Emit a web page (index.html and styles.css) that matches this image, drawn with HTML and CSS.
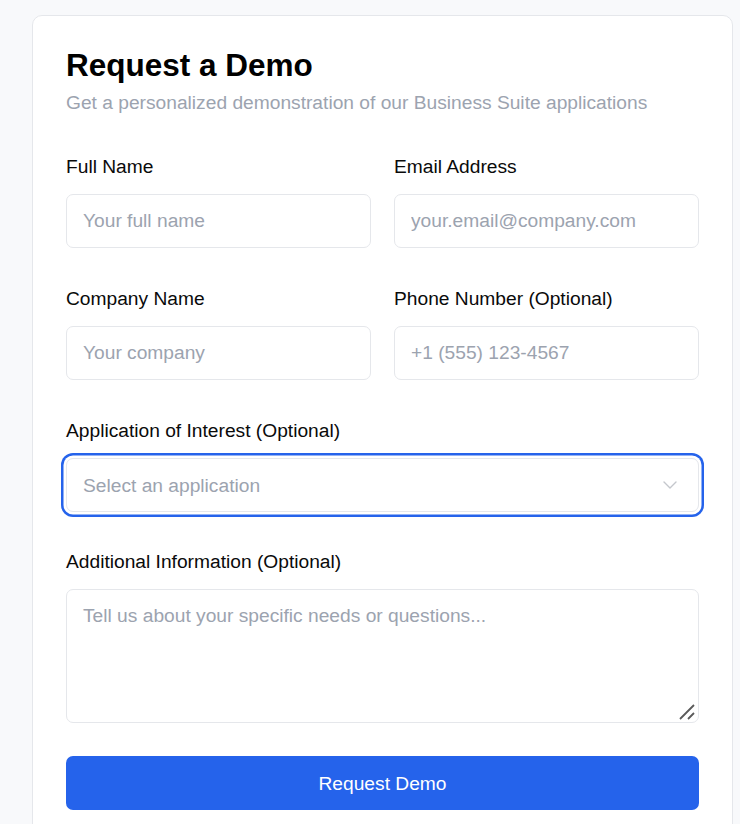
FILE: index.html
```html
<!DOCTYPE html>
<html lang="en">
<head>
<meta charset="utf-8">
<title>Request a Demo</title>
<link rel="stylesheet" href="styles.css">
</head>
<body>
<div class="card">
  <h1 class="title">Request a Demo</h1>
  <p class="subtitle">Get a personalized demonstration of our Business Suite applications</p>
  <form class="form">
    <div class="grid">
      <div class="field">
        <label class="label" for="name">Full Name</label>
        <input class="input" id="name" type="text" placeholder="Your full name">
      </div>
      <div class="field">
        <label class="label" for="email">Email Address</label>
        <input class="input" id="email" type="email" placeholder="your.email@company.com">
      </div>
      <div class="field">
        <label class="label" for="company">Company Name</label>
        <input class="input" id="company" type="text" placeholder="Your company">
      </div>
      <div class="field">
        <label class="label" for="phone">Phone Number (Optional)</label>
        <input class="input" id="phone" type="tel" placeholder="+1 (555) 123-4567">
      </div>
    </div>
    <div class="field">
      <label class="label" for="app">Application of Interest (Optional)</label>
      <div class="select-wrap">
        <select class="input select focused" id="app">
          <option value="" selected>Select an application</option>
        </select>
        <svg class="chevron" width="14" height="8" viewBox="0 0 14 8"><path d="M1 1l6 6 6-6" fill="none" stroke="#c4c7cc" stroke-width="1.4" stroke-linecap="round" stroke-linejoin="round"/></svg>
      </div>
    </div>
    <div class="field field-info">
      <label class="label" for="info">Additional Information (Optional)</label>
      <div class="textarea-wrap">
        <textarea class="input textarea" id="info" placeholder="Tell us about your specific needs or questions..."></textarea>
        <svg class="grip" width="18" height="18" viewBox="0 0 18 18"><path d="M2 16L16 2M10 16l6-6" fill="none" stroke="#5a5a5a" stroke-width="1.8"/></svg>
      </div>
    </div>
    <button class="button" type="button">Request Demo</button>
  </form>
</div>
</body>
</html>
```

FILE: styles.css
```css
* { box-sizing: border-box; }
html, body { margin: 0; }
body {
  background: #f8f9fb;
  font-family: "Liberation Sans", Arial, sans-serif;
  padding: 15px 7px 0 32px;
  overflow: hidden;
}
.card {
  background: #fff;
  border: 1px solid #e5e7eb;
  border-radius: 10px;
  padding: 31px 33px 34px 33px;
}
.title {
  margin: 0;
  font-size: 31.5px;
  line-height: 37.8px;
  font-weight: 700;
  color: #000;
}
.subtitle {
  margin: 4.5px 0 0;
  font-size: 19.2px;
  line-height: 28px;
  color: #9ca3af;
}
.form {
  margin-top: 35.6px;
  display: flex;
  flex-direction: column;
  gap: 37px;
}
.grid {
  display: grid;
  grid-template-columns: 1fr 1fr;
  column-gap: 23px;
  row-gap: 37px;
}
.field {
  display: flex;
  flex-direction: column;
  gap: 13px;
}
.field-info { margin-top: -1px; }
.label {
  font-size: 19.2px;
  line-height: 28px;
  color: #0a0a0a;
}
.input {
  width: 100%;
  height: 54px;
  border: 1px solid #e5e7eb;
  border-radius: 7px;
  background: #fff;
  padding: 1px 16px 0;
  font-family: "Liberation Sans", Arial, sans-serif;
  font-size: 19.2px;
  color: #111;
  outline: none;
  margin: 0;
}
.input::placeholder { color: #9ca3af; }
.select-wrap { position: relative; }
.select {
  appearance: none;
  -webkit-appearance: none;
  color: #9ca3af;
}
.focused {
  box-shadow: 0 0 0 2.5px #fff, 0 0 0 5px #2563eb;
}
.chevron {
  position: absolute;
  right: 22px;
  top: 23px;
  pointer-events: none;
}
.textarea-wrap { position: relative; }
.textarea {
  height: 134px;
  padding: 12px 16px;
  line-height: 28px;
  resize: none;
  display: block;
}
.grip {
  position: absolute;
  right: 3px;
  bottom: 2px;
  pointer-events: none;
}
.button {
  height: 54px;
  width: 100%;
  border: none;
  border-radius: 7px;
  background: #2563eb;
  color: #fff;
  font-family: "Liberation Sans", Arial, sans-serif;
  font-size: 19.2px;
  cursor: pointer;
  margin-top: -4px;
  padding-top: 3px;
}
```
